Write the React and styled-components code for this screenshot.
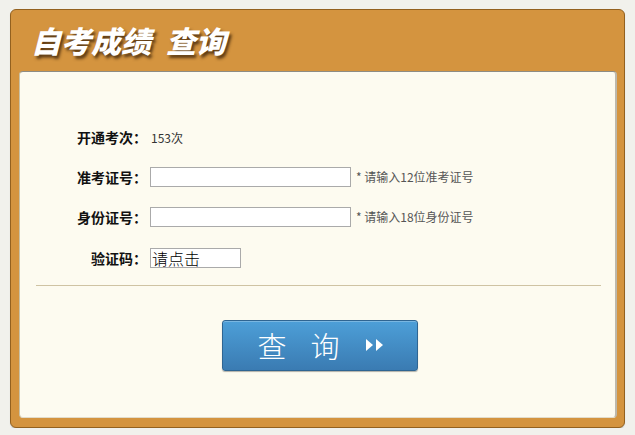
import React from "react";
import styled, { createGlobalStyle } from "styled-components";

const GlobalStyle = createGlobalStyle`
  html, body {
    margin: 0;
    padding: 0;
    background: #f1f1ec;
    font-family: "Noto Sans CJK SC", "Liberation Sans", sans-serif;
  }
`;

const Page = styled.div`
  padding: 9px 10px 0 10px;
`;

const Box = styled.div`
  width: 615px;
  height: 419px;
  box-sizing: border-box;
  background: #d4943f;
  border: 1px solid #93611f;
  border-radius: 6px;
  box-shadow: 0 1px 1px rgba(0, 0, 0, 0.15);
  display: flex;
  flex-direction: column;
  padding: 0 7px 9px 8px;
`;

const Header = styled.div`
  height: 61px;
  display: flex;
  align-items: center;
  padding-left: 12px;
  padding-bottom: 2px;
  box-sizing: border-box;
`;

const Title = styled.h1`
  margin: 0;
  font-size: 30px;
  font-weight: 900;
  font-style: italic;
  color: #fff;
  text-shadow: 2px 3px 3px rgba(60, 35, 10, 0.8);
  display: flex;
  gap: 15px;
`;

const Panel = styled.div`
  flex: 1;
  background: #fdfbf0;
  border-radius: 4px;
  border-top: 1px solid #8e8c84;
  border-left: 1px solid #c9c1a6;
  border-right: 2px solid #bdb8ac;
  border-bottom: 1px solid #e2dccb;
  padding: 45px 14px 0 16px;
  display: flex;
  flex-direction: column;
`;

const Form = styled.div`
  display: grid;
  grid-template-columns: 111px 1fr;
  grid-auto-rows: 40px;
  column-gap: 3px;
  align-items: center;
`;

const Label = styled.div`
  text-align: right;
  font-size: 14px;
  font-weight: 700;
  color: #111;
  margin-top: ${(p) => p.$shift || 0}px;
`;

const Field = styled.div`
  display: flex;
  align-items: center;
  margin-top: ${(p) => p.$shift || 0}px;
`;

const Value = styled.span`
  font-size: 12px;
  color: #333;
  margin-left: 1px;
`;

const Input = styled.input`
  width: 201px;
  height: 20px;
  box-sizing: border-box;
  border: 1px solid #aaa;
  background: #fff;
  padding: 0 3px;
  outline: none;
`;

const Hint = styled.span`
  margin-left: 5px;
  font-size: 12px;
  color: #555;
`;

const Captcha = styled.div`
  width: 91px;
  height: 20px;
  box-sizing: border-box;
  border: 1px solid #aaa;
  background: #fff;
  font-size: 16px;
  font-weight: 300;
  line-height: 18px;
  color: #000;
  padding-left: 1px;
  cursor: pointer;
`;

const Divider = styled.hr`
  margin: 8px 0 0 0;
  border: 0;
  border-top: 1px solid #cfc3a3;
`;

const ButtonRow = styled.div`
  display: flex;
  justify-content: center;
  padding-top: 34px;
  padding-left: 2px;
`;

const SearchButton = styled.button`
  width: 196px;
  height: 51px;
  border: 1px solid #2f6592;
  border-radius: 3px;
  background: linear-gradient(#4d9fd8, #3a7bb2);
  box-shadow: inset 0 1px 0 rgba(255, 255, 255, 0.25), 0 1px 1px rgba(0, 0, 0, 0.3);
  color: #fff;
  font-family: "Noto Sans CJK SC", sans-serif;
  font-size: 29px;
  font-weight: 300;
  display: flex;
  align-items: center;
  justify-content: center;
  gap: 24px;
  padding: 0 0 2px 4px;
  cursor: pointer;
`;

const Arrows = styled.svg`
  width: 22px;
  height: 14px;
`;

export default function App() {
  return (
    <>
      <GlobalStyle />
      <Page>
        <Box>
          <Header>
            <Title>
              <span>自考成绩</span>
              <span>查询</span>
            </Title>
          </Header>
          <Panel>
            <Form>
              <Label>开通考次：</Label>
              <Field>
                <Value>153次</Value>
              </Field>
              <Label $shift={-1}>准考证号：</Label>
              <Field $shift={-1}>
                <Input />
                <Hint>* 请输入12位准考证号</Hint>
              </Field>
              <Label $shift={-1}>身份证号：</Label>
              <Field $shift={-1}>
                <Input />
                <Hint>* 请输入18位身份证号</Hint>
              </Field>
              <Label $shift={2}>验证码：</Label>
              <Field $shift={2}>
                <Captcha>请点击</Captcha>
              </Field>
            </Form>
            <Divider />
            <ButtonRow>
              <SearchButton>
                <span>查</span>
                <span>询</span>
                <Arrows viewBox="0 0 22 14">
                  <path d="M2 1 L9 7 L2 13 Z" fill="#fff" />
                  <path d="M12 1 L19 7 L12 13 Z" fill="#fff" />
                </Arrows>
              </SearchButton>
            </ButtonRow>
          </Panel>
        </Box>
      </Page>
    </>
  );
}
